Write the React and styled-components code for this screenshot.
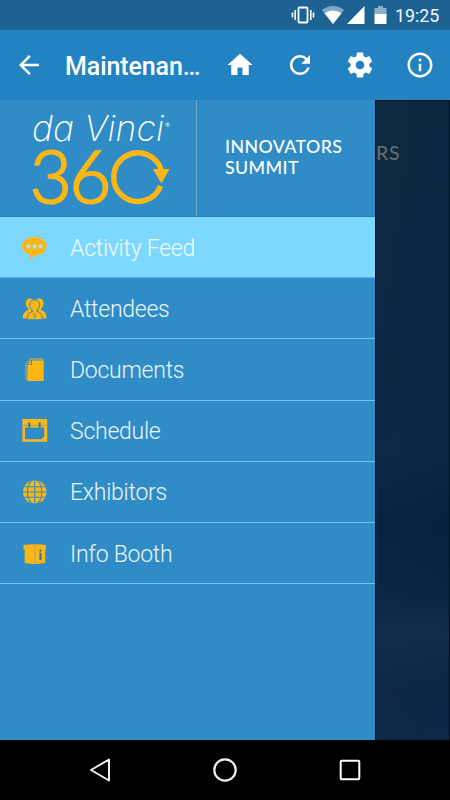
import React from 'react';
import styled, { createGlobalStyle } from 'styled-components';
import { MdArrowBack, MdHome, MdRefresh } from 'react-icons/md';

const GlobalStyle = createGlobalStyle`
  * {
    box-sizing: border-box;
  }

  body {
    margin: 0;
    background-color: #000;
    font-family: Roboto, sans-serif;
  }
`;

const Screen = styled.div`
  display: flex;
  flex-direction: column;
  width: 450px;
  height: 800px;
  overflow: hidden;
`;

const StatusBar = styled.div`
  display: flex;
  align-items: center;
  justify-content: flex-end;
  height: 30px;
  padding-right: 10px;
  background-color: #1c6394;
`;

const StatusIcon = styled.svg`
  flex: none;
  width: ${(props) => props.$width}px;
  height: 20px;
  margin-right: ${(props) => props.$gap}px;
`;

const Clock = styled.span`
  color: #f4f8fb;
  font-size: 17.8px;
  line-height: 30px;
  width: 45px;
  padding-top: 1px;
`;

const AppBar = styled.header`
  display: flex;
  align-items: center;
  height: 70px;
  padding: 0 15px 0 14px;
  color: #fff;
  background-color: #2383c2;

  svg {
    flex: none;
    width: 30px;
    height: 30px;
  }
`;

const Title = styled.h1`
  width: 137px;
  margin: 3px 24px 0 21px;
  font-size: 25px;
  font-weight: 500;
  line-height: 30px;
  letter-spacing: -0.1px;
  white-space: nowrap;
`;

const Actions = styled.div`
  display: flex;
  gap: 30px;
  margin-left: auto;
`;

const Body = styled.main`
  display: flex;
  height: 640px;
`;

const Drawer = styled.nav`
  width: 375px;
  background-color: #308cc6;
`;

const Banner = styled.div`
  display: flex;
  height: 117px;
  border-bottom: 1px solid #2182c0;
`;

const LogoBox = styled.div`
  width: 197px;
  border-right: 1px solid #72a9cd;

  svg {
    display: block;
    overflow: visible;
  }
`;

const EventName = styled.h2`
  margin: 36px 0 0 28px;
  color: #fff;
  font-family: Lato, sans-serif;
  font-size: 17.8px;
  font-weight: 500;
  line-height: 21px;
  letter-spacing: 0.4px;
`;

const Menu = styled.ul`
  margin: 0;
  padding: 0;
  list-style: none;
`;

const MenuItem = styled.li`
  display: flex;
  align-items: center;
  height: 61.2px;
  padding-left: 21px;
  border-bottom: 1px solid ${(props) => (props.$active ? '#5cb2e2' : '#70c9fa')};
  color: ${(props) => (props.$active ? '#f3fbff' : '#e9f5fc')};
  background-color: ${(props) => (props.$active ? '#7dd8ff' : 'transparent')};

  svg {
    width: 28px;
    height: 28px;
    margin: 1px 21px 0 0;
    color: #fdb714;
  }
`;

const Label = styled.span`
  padding-top: 2px;
  font-size: 23px;
  font-weight: 300;
  letter-spacing: -0.25px;
`;

const Backdrop = styled.section`
  width: 75px;
  border: 1px solid #020d1c;
  border-bottom: none;
  background: linear-gradient(100deg, rgba(16, 44, 66, 0.5), rgba(4, 32, 66, 0.4)),
    linear-gradient(#0a2743 0%, #0b2946 55%, #05203f 66%, #092643 77%, #18344f 83%, #102a48 92%, #122c4b 100%);
`;

const BackdropText = styled.span`
  display: block;
  margin-top: 41px;
  color: #6a6a6a;
  font-family: Lato, sans-serif;
  font-size: 19.5px;
  font-weight: 500;
  line-height: 22px;
  letter-spacing: 0.8px;
`;

const NavBar = styled.footer`
  display: grid;
  grid-template-columns: repeat(3, 125px);
  justify-content: center;
  place-items: center;
  height: 60px;
  background-color: #000;
`;

const Logo = () => (
  <svg width="196" height="116" viewBox="0 0 196 116">
    <text
      x="32"
      y="41"
      fill="#fff"
      fontFamily="Inter, sans-serif"
      fontSize="35.5"
      fontStyle="italic"
      fontWeight="200"
      textLength="132"
      lengthAdjust="spacingAndGlyphs"
    >
      da Vinci
    </text>
    <text x="165" y="27" fill="#fff" fontFamily="Lato, sans-serif" fontSize="6">
      ®
    </text>
    <g
      fill="#fdb714"
      stroke="#fdb714"
      strokeWidth="2.2"
      fontFamily="Lato, sans-serif"
      fontSize="72"
      fontWeight="300"
    >
      <text x="30" y="102.5">3</text>
      <text x="69.500" y="102.5">6</text>
    </g>
    <path
      d="M161.5 71A24.3 24.3 0 1 0 160.6 86"
      fill="none"
      stroke="#fdb714"
      strokeWidth="5.4"
    />
    <path d="M153 69H169.5L161.5 83.5Z" fill="#fdb714" />
  </svg>
);

const SettingsIcon = () => (
  <svg viewBox="0 0 24 24" fill="currentColor">
    <path d="M19.43 12.98c.04-.32.07-.64.07-.98s-.03-.66-.07-.98l2.11-1.65c.19-.15.24-.42.12-.64l-2-3.46c-.12-.22-.39-.3-.61-.22l-2.49 1c-.52-.4-1.08-.73-1.69-.98l-.38-2.65C14.46 2.18 14.25 2 14 2h-4c-.25 0-.46.18-.49.42l-.38 2.65c-.61.25-1.17.59-1.69.98l-2.49-1c-.23-.09-.49 0-.61.22l-2 3.46c-.13.22-.07.49.12.64l2.11 1.65c-.04.32-.07.65-.07.98s.03.66.07.98l-2.11 1.65c-.19.15-.24.42-.12.64l2 3.46c.12.22.39.3.61.22l2.49-1c.52.4 1.08.73 1.69.98l.38 2.65c.03.24.24.42.49.42h4c.25 0 .46-.18.49-.42l.38-2.65c.61-.25 1.17-.59 1.69-.98l2.49 1c.23.09.49 0 .61-.22l2-3.46c.12-.22.07-.49-.12-.64l-2.11-1.65zM12 15.5c-1.93 0-3.5-1.57-3.5-3.5s1.57-3.5 3.5-3.5 3.5 1.57 3.5 3.5-1.57 3.5-3.5 3.5z" />
  </svg>
);

const InfoIcon = () => (
  <svg viewBox="0 0 24 24" fill="currentColor">
    <path d="M11 17h2v-6h-2v6zm1-15C6.48 2 2 6.48 2 12s4.48 10 10 10 10-4.48 10-10S17.52 2 12 2zm0 18c-4.41 0-8-3.59-8-8s3.59-8 8-8 8 3.59 8 8-3.59 8-8 8zM11 9h2V7h-2v2z" />
  </svg>
);

const ChatIcon = () => (
  <svg viewBox="0 0 28 28" fill="currentColor">
    <path d="M13.3 3C6.3 3 1 7 1 12.2C1 16.2 4.5 19.5 9.5 20.8C9.6 22.3 8.8 23.4 7.6 24.5C10.6 24.3 12.8 23 14 21.5C20.8 21.3 25.7 17.4 25.7 12.2C25.7 7 20.3 3 13.3 3Z" />
    <g fill="#a5e4fb">
      <circle cx="7.3" cy="12.3" r="2.1" />
      <circle cx="13.5" cy="12.3" r="2.1" />
      <circle cx="19.7" cy="12.3" r="2.1" />
    </g>
  </svg>
);

const AttendeesIcon = () => (
  <svg viewBox="0 0 28 28" fill="currentColor">
    <path d="M9 3.5C12 3.5 13 5.5 13 8C13 11 11.5 13 10.5 14V16L8 23.5H1.8C2 18.5 3.5 16.3 7.2 15.3V13.5C5.8 12.5 4.8 10.5 4.8 8C4.8 5.3 6.5 3.5 9 3.5Z" />
    <path d="M18.4 3.5C15.4 3.5 14.4 5.5 14.4 8C14.4 11 15.9 13 16.9 14V16L19.4 23.5H25.6C25.4 18.5 23.9 16.3 20.2 15.3V13.5C21.6 12.5 22.6 10.5 22.6 8C22.6 5.3 20.9 3.5 18.4 3.5Z" />
    <path
      d="M13.7 4.8C16.9 4.8 18.7 7 18.7 9.8C18.7 12.5 17.2 14.2 16 15.3V16.5C19.7 17.5 21.2 19.5 21.4 24.8H6C6.2 19.5 7.7 17.5 11.4 16.5V15.3C10.2 14.2 8.7 12.5 8.7 9.8C8.7 7 10.5 4.8 13.7 4.8Z"
      stroke="#308cc6"
      strokeWidth="1"
    />
    <path d="M12.5 18L13.7 23.5L14.9 18" fill="none" stroke="#308cc6" strokeWidth=".6" />
  </svg>
);

const DocumentsIcon = () => (
  <svg viewBox="0 0 28 28" fill="currentColor">
    <path d="M10 3H21.5V4.5M5 23V8L10 3M5 23H7" fill="none" stroke="#b5a267" strokeWidth="1.3" />
    <path d="M11 4.5H22.7V25H6.5V9H11Z" />
    <path d="M10.2 4.8V8.3H6.7Z" />
  </svg>
);

const ScheduleIcon = () => (
  <svg viewBox="0 0 28 28" fill="currentColor">
    <path
      fillRule="evenodd"
      d="M1 2H26.2V24.7H1ZM4 10.5V22.2H20.5L23.2 19.5V10.5Z"
    />
    <path d="M1.5 2.5V24.5M1 8.3H26" stroke="#a99d6e" strokeWidth="1" />
    <path d="M8.3 5.5V10.5M18.7 5.5V10.5" stroke="#26799f" strokeWidth="2" />
  </svg>
);

const GlobeIcon = () => (
  <svg viewBox="0 0 28 28">
    <circle cx="13.7" cy="14" r="11.7" fill="currentColor" />
    <g fill="none" stroke="#308cc6" strokeWidth="1.1">
      <ellipse cx="13.7" cy="14" rx="7.3" ry="12.5" />
      <path d="M13.7 2V27M1 14H27M2 8.8H25.5M2 19.2H25.5" />
    </g>
  </svg>
);

const BoothIcon = () => (
  <svg viewBox="0 0 28 28" fill="currentColor">
    <path d="M2.5 5L11.5 4.3H16L25 5V9.5H24.2V23L16 24H11.5L3.7 23V9.5H2.5Z" />
    <path d="M14 4.5V24" stroke="#b5a267" strokeWidth="1" />
    <path d="M19.5 9.5V11.5M19.5 12.8V20" stroke="#26799f" strokeWidth="2" />
  </svg>
);

const items = [
  { label: 'Activity Feed', Icon: ChatIcon, active: true },
  { label: 'Attendees', Icon: AttendeesIcon },
  { label: 'Documents', Icon: DocumentsIcon },
  { label: 'Schedule', Icon: ScheduleIcon },
  { label: 'Exhibitors', Icon: GlobeIcon },
  { label: 'Info Booth', Icon: BoothIcon },
];

function App() {
  return (
    <Screen>
      <GlobalStyle />
      <StatusBar>
        <StatusIcon $width={24} $gap={7} viewBox="0 0 24 20" fill="none" stroke="#fff">
          <rect x="7.5" y="2.5" width="9" height="15" rx="1" strokeWidth="1.8" />
          <path d="M4.2 5V15M1.5 7.5V12.5M19.8 5V15M22.5 7.5V12.5" strokeWidth="1.6" />
        </StatusIcon>
        <StatusIcon $width={22} $gap={3} viewBox="0 0 22 20" fill="#fff">
          <path d="M11 19L0 5Q11 -3 22 5Z" opacity=".45" />
          <path d="M11 19L2.5 8.3Q11 2.7 19.5 8.3Z" />
        </StatusIcon>
        <StatusIcon $width={18} $gap={9} viewBox="0 0 18 20" fill="#fff">
          <path d="M17.5 1V19H0Z" />
        </StatusIcon>
        <StatusIcon $width={13} $gap={8.5} viewBox="0 0 13 20" fill="#fff">
          <path d="M4 1H9V3H12.5V9H.5V3H4Z" opacity=".5" />
          <path d="M.5 9H12.5V19H.5Z" />
        </StatusIcon>
        <Clock>19:25</Clock>
      </StatusBar>
      <AppBar>
        <MdArrowBack />
        <Title>Maintenan…</Title>
        <Actions>
          <MdHome />
          <MdRefresh />
          <SettingsIcon />
          <InfoIcon />
        </Actions>
      </AppBar>
      <Body>
        <Drawer>
          <Banner>
            <LogoBox>
              <Logo />
            </LogoBox>
            <EventName>
              INNOVATORS
              <br />
              SUMMIT
            </EventName>
          </Banner>
          <Menu>
            {items.map(({ label, Icon, active }) => (
              <MenuItem key={label} $active={active}>
                <Icon />
                <Label>{label}</Label>
              </MenuItem>
            ))}
          </Menu>
        </Drawer>
        <Backdrop>
          <BackdropText>RS</BackdropText>
        </Backdrop>
      </Body>
      <NavBar>
        <svg width="24" height="26" viewBox="0 0 24 26" fill="none" stroke="#eee" strokeWidth="2">
          <path d="M21 2.5V23.5L3 13Z" strokeLinejoin="round" />
        </svg>
        <svg width="26" height="26" viewBox="0 0 26 26" fill="none" stroke="#eee" strokeWidth="2.2">
          <circle cx="13" cy="13" r="10.7" />
        </svg>
        <svg width="24" height="24" viewBox="0 0 24 24" fill="none" stroke="#fff" strokeWidth="2">
          <rect x="2.7" y="2.7" width="18.6" height="18.6" rx="1" />
        </svg>
      </NavBar>
    </Screen>
  );
}

export default App;
